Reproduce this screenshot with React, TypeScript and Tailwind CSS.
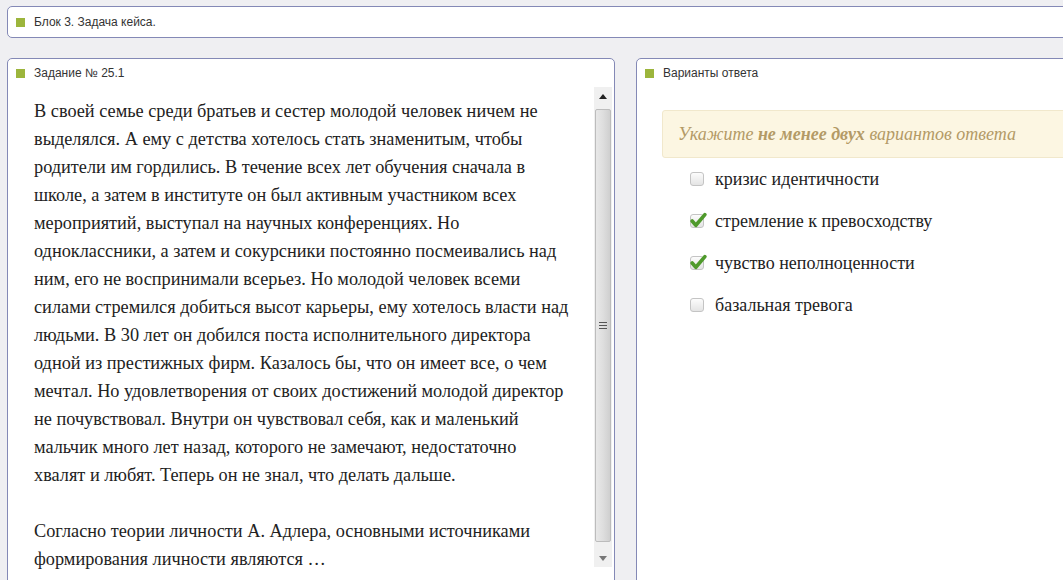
import React from 'react';

const serif = { fontFamily: '"Liberation Serif", "Times New Roman", serif' };

const caseLines = [
  'В своей семье среди братьев и сестер молодой человек ничем не',
  'выделялся. А ему с детства хотелось стать знаменитым, чтобы',
  'родители им гордились. В течение всех лет обучения сначала в',
  'школе, а затем в институте он был активным участником всех',
  'мероприятий, выступал на научных конференциях. Но',
  'одноклассники, а затем и сокурсники постоянно посмеивались над',
  'ним, его не воспринимали всерьез. Но молодой человек всеми',
  'силами стремился добиться высот карьеры, ему хотелось власти над',
  'людьми. В 30 лет он добился поста исполнительного директора',
  'одной из престижных фирм. Казалось бы, что он имеет все, о чем',
  'мечтал. Но удовлетворения от своих достижений молодой директор',
  'не почувствовал. Внутри он чувствовал себя, как и маленький',
  'мальчик много лет назад, которого не замечают, недостаточно',
  'хвалят и любят. Теперь он не знал, что делать дальше.',
];

const questionLines = [
  'Согласно теории личности А. Адлера, основными источниками',
  'формирования личности являются …',
];

const options = [
  { label: 'кризис идентичности', checked: false },
  { label: 'стремление к превосходству', checked: true },
  { label: 'чувство неполноценности', checked: true },
  { label: 'базальная тревога', checked: false },
];

function Marker() {
  return <span className="w-[9px] h-[9px] bg-[#9cb53c] shrink-0" />;
}

function PanelTitle({ children }: { children: React.ReactNode }) {
  return (
    <div className="flex items-center gap-[9px] pl-[8px] h-[28px] text-[12px] text-[#333]">
      <Marker />
      <span>{children}</span>
    </div>
  );
}

function Checkbox({ checked }: { checked: boolean }) {
  return (
    <span className="relative w-[14px] h-[14px] shrink-0 rounded-[3px] border border-[#c4c4c4] bg-gradient-to-b from-[#fcfcfc] to-[#e4e4e4]">
      {checked && (
        <svg className="absolute left-[-1px] top-[-3px]" width="17" height="17" viewBox="0 0 16 16">
          <path d="M2 8.5 L5.5 12.5 L14 2.5" fill="none" stroke="#4f9a2c" strokeWidth="3.4" strokeLinecap="round" strokeLinejoin="round" />
        </svg>
      )}
    </span>
  );
}

function ScrollArrow({ up }: { up: boolean }) {
  return (
    <div className="h-[18px] flex items-center justify-center">
      <svg width="8" height="5" viewBox="0 0 8 5">
        <path d={up ? 'M0 5 L4 0 L8 5 Z' : 'M0 0 L4 5 L8 0 Z'} fill={up ? '#222' : '#777'} />
      </svg>
    </div>
  );
}

export default function App() {
  return (
    <div
      className="w-[1063px] h-[580px] overflow-hidden bg-[#efeff2] pt-[6px] pl-[7px]"
      style={{ fontFamily: '"Liberation Sans", Arial, sans-serif' }}
    >
      {/* block title */}
      <div className="w-[1080px] h-[32px] bg-white border border-[#8489b6] rounded-[5px] flex items-center gap-[9px] pl-[8px] text-[12px] text-[#333]">
        <Marker />
        <span>Блок 3. Задача кейса.</span>
      </div>

      <div className="flex gap-[21px] mt-[20px]">
        {/* case text */}
        <div className="w-[608px] shrink-0 h-[540px] bg-white border border-[#8489b6] rounded-[5px] flex flex-col">
          <PanelTitle>Задание № 25.1</PanelTitle>
          <div className="flex h-[480px]">
            <div className="flex-1 pl-[26px] pt-[10px] text-[18.3px] leading-[28px] text-[#222] whitespace-nowrap" style={serif}>
              {caseLines.map((l) => (
                <div key={l}>{l}</div>
              ))}
              <div className="h-[28px]" />
              {questionLines.map((l) => (
                <div key={l}>{l}</div>
              ))}
            </div>
            <div className="w-[18px] mr-[2px] bg-[#f0f0f0] flex flex-col">
              <ScrollArrow up />
              <div className="mx-[1px] mt-[4px] h-[433px] rounded-[2px] border border-[#bcbcbc] bg-gradient-to-r from-[#e8e8e8] via-[#dedede] to-[#cfcfcf] flex items-center justify-center">
                <div className="flex flex-col gap-[2px]">
                  <span className="block w-[8px] h-[1px] bg-[#555]" />
                  <span className="block w-[8px] h-[1px] bg-[#555]" />
                  <span className="block w-[8px] h-[1px] bg-[#555]" />
                </div>
              </div>
              <div className="flex-1" />
              <ScrollArrow up={false} />
            </div>
          </div>
        </div>

        {/* answers */}
        <div className="w-[460px] shrink-0 h-[540px] bg-white border border-[#8489b6] rounded-[5px] flex flex-col">
          <PanelTitle>Варианты ответа</PanelTitle>
          <div className="ml-[25px] mt-[23px] h-[48px] bg-[#fcf6e2] border border-[#f1e8cc] rounded-[3px] flex items-center pl-[15px] text-[18px] italic text-[#b39a66]" style={serif}>
            <span>
              Укажите <b>не менее двух</b> вариантов ответа
            </span>
          </div>
          <div className="flex flex-col gap-[18px] mt-[9px] pl-[53px] text-[18px] text-[#222]" style={serif}>
            {options.map((o) => (
              <label key={o.label} className="flex items-center gap-[11px] h-[24px]">
                <Checkbox checked={o.checked} />
                <span>{o.label}</span>
              </label>
            ))}
          </div>
        </div>
      </div>
    </div>
  );
}
